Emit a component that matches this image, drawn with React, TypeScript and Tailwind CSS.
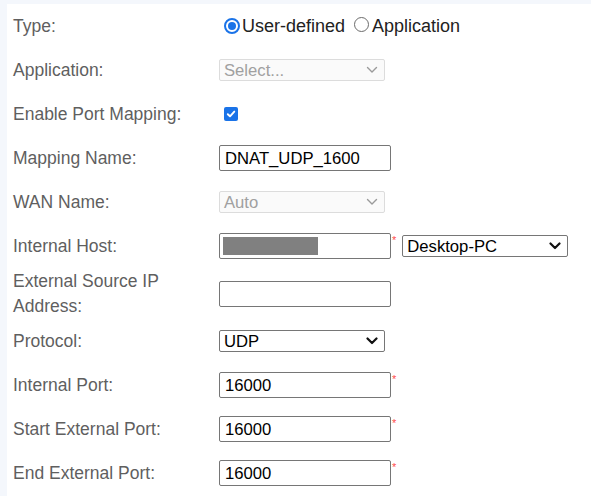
import React from "react";

function Row({ label, h = "h-[44px]", children }: { label: React.ReactNode; h?: string; children?: React.ReactNode }) {
  return (
    <div className={`flex items-center ${h}`}>
      <div className="w-[212px] shrink-0 pl-[6px] text-[#5f5f5f] text-[17.5px] leading-[25px]">{label}</div>
      <div className="flex items-center text-[16.67px]">{children}</div>
    </div>
  );
}

function Star() {
  return <span className="self-start text-[11px] leading-none text-[#ff4b4b] ml-[1px] mt-[2px]">*</span>;
}

function TextBox({ value = "", children }: { value?: string; children?: React.ReactNode }) {
  return (
    <div className="relative w-[172px] h-[26px] border border-[#767676] rounded-[2px] bg-white flex items-center px-[5px] text-black">
      {children ?? <span>{value}</span>}
    </div>
  );
}

function Chevron({ color = "#111", width = 2.2 }: { color?: string; width?: number }) {
  return (
    <svg width="12" height="8" viewBox="0 0 12 8" className="shrink-0">
      <path d="M1.5 1.5 L6 6 L10.5 1.5" fill="none" stroke={color} strokeWidth={width} strokeLinecap="round" strokeLinejoin="round" />
    </svg>
  );
}

function SelectBox({ value, disabled = false }: { value: string; disabled?: boolean }) {
  return (
    <div
      className={`w-[166px] h-[22px] rounded-[2px] flex items-center justify-between pl-[4px] pr-[6px] ${
        disabled ? "border border-[#dcdcdc] bg-[#fafafa] text-[#a0a0a0]" : "border border-[#767676] bg-white text-black"
      }`}
    >
      <span>{value}</span>
      {disabled ? <Chevron color="#9a9a9a" width={1.4} /> : <Chevron />}
    </div>
  );
}

function Radio({ checked }: { checked?: boolean }) {
  return checked ? (
    <span className="w-4 h-4 shrink-0 rounded-full border-2 border-[#1a73e8] flex items-center justify-center">
      <span className="w-[8px] h-[8px] rounded-full bg-[#1a73e8]" />
    </span>
  ) : (
    <span className="w-[15px] h-[15px] shrink-0 rounded-full border border-[#6b6b6b] bg-white" />
  );
}

export default function App() {
  return (
    <div className="w-[591px] h-[496px] bg-[#f4f7fc] pt-[4px] pl-[7px] overflow-hidden" style={{ fontFamily: '"Liberation Sans", Arial, sans-serif' }}>
      <div className="bg-white h-full">
        <Row label="Type:">
          <div className="flex items-center pl-[5px] text-[#222] text-[18px]">
            <Radio checked />
            <span className="ml-[2px]">User-defined</span>
            <span className="ml-[9px] -mt-[3px] flex"><Radio /></span>
            <span className="ml-[3px]">Application</span>
          </div>
        </Row>
        <Row label="Application:">
          <SelectBox value="Select..." disabled />
        </Row>
        <Row label="Enable Port Mapping:">
          <span className="ml-[5px] w-[14px] h-[14px] rounded-[2px] bg-[#1a73e8] flex items-center justify-center">
            <svg width="10" height="10" viewBox="0 0 10 10">
              <path d="M1.8 5.2 L4 7.3 L8.3 2.6" fill="none" stroke="white" strokeWidth="1.9" strokeLinecap="round" strokeLinejoin="round" />
            </svg>
          </span>
        </Row>
        <Row label="Mapping Name:">
          <TextBox value="DNAT_UDP_1600" />
        </Row>
        <Row label="WAN Name:">
          <SelectBox value="Auto" disabled />
        </Row>
        <Row label="Internal Host:">
          <TextBox>
            <span className="block w-[95px] h-[18px] bg-[#808080] -ml-[2px]" />
          </TextBox>
          <Star />
          <div className="ml-[6px]">
            <SelectBox value="Desktop-PC" />
          </div>
        </Row>
        <Row label={<div className="max-w-[180px]">External Source IP Address:</div>} h="h-[51px]">
          <TextBox />
        </Row>
        <Row label="Protocol:">
          <SelectBox value="UDP" />
        </Row>
        <Row label="Internal Port:">
          <TextBox value="16000" />
          <Star />
        </Row>
        <Row label="Start External Port:">
          <TextBox value="16000" />
          <Star />
        </Row>
        <Row label="End External Port:">
          <TextBox value="16000" />
          <Star />
        </Row>
      </div>
    </div>
  );
}
